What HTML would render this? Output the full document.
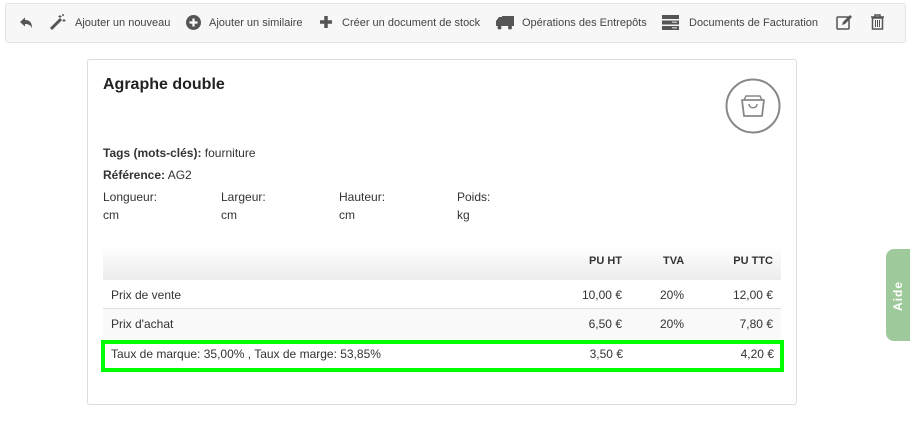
<!DOCTYPE html>
<html><head><meta charset="utf-8"><style>
*{box-sizing:border-box;margin:0;padding:0}
body{width:910px;height:427px;background:#fff;font-family:"Liberation Sans",Arial,sans-serif;color:#333;font-size:12px;position:relative;overflow:hidden}
.tb{position:absolute;left:5px;top:3px;width:901px;height:40px;background:#f7f7f7;border:1px solid #e3e3e3;border-radius:3px}
.tb span{position:absolute;top:13px;font-size:11px;color:#444;white-space:nowrap}
.tb svg{position:absolute}
.card{position:absolute;left:87px;top:59px;width:710px;height:346px;border:1px solid #ddd;border-radius:3px;background:#fff}
.abs{position:absolute;white-space:nowrap}
h1{position:absolute;left:15px;top:16px;font-size:16px;font-weight:bold;color:#222}
.lbl{font-size:12px;color:#333}
.thead{position:absolute;left:15px;top:186px;width:678px;height:34px;background:linear-gradient(#fff,#ececec)}
.row{position:absolute;left:15px;width:678px}
.r{position:absolute;text-align:right}
.aide{position:absolute;left:886px;top:249px;width:26px;height:92px;background:#9ec99a;border-radius:8px 0 0 8px}
.aide span{position:absolute;left:5px;top:62px;transform:rotate(-90deg);transform-origin:0 0;color:#fff;font-weight:bold;font-size:12px;letter-spacing:1px;width:40px}
</style></head><body>
<div class="tb">
<svg style="left:13px;top:12px" width="14" height="14" viewBox="0 0 14 14"><path d="M1 6 L6 1.5 V4 C11 4 13 7 13 12 C11 8.5 9 8 6 8 V10.5 Z" fill="#555"/></svg>
<svg style="left:43px;top:9px" width="18" height="18" viewBox="0 0 18 18"><path d="M2 16 L12 6" stroke="#555" stroke-width="3"/><path d="M11 2v3M9.5 3.5h3M15 6v3M13.5 7.5h3M14 1v2M13 2h2" stroke="#555" stroke-width="1"/></svg>
<span style="left:69px">Ajouter un nouveau</span>
<svg style="left:180px;top:11px" width="15" height="15" viewBox="0 0 15 15"><circle cx="7.5" cy="7.5" r="7.5" fill="#555"/><path d="M7.5 3.5v8M3.5 7.5h8" stroke="#fff" stroke-width="2.2"/></svg>
<span style="left:203px">Ajouter un similaire</span>
<svg style="left:313px;top:11px" width="14" height="14" viewBox="0 0 14 14"><path d="M7 1v12M1 7h12" stroke="#555" stroke-width="3.5"/></svg>
<span style="left:336px">Créer un document de stock</span>
<svg style="left:490px;top:11px" width="18" height="15" viewBox="0 0 18 15"><path d="M6 1h12v10H6zM0 6l3-4h3v9H0z" fill="#555"/><circle cx="3.5" cy="12.5" r="2" fill="#555"/><circle cx="14" cy="12.5" r="2" fill="#555"/></svg>
<span style="left:516px">Opérations des Entrepôts</span>
<svg style="left:656px;top:11px" width="17" height="15" viewBox="0 0 17 15"><rect y="0" width="17" height="4" fill="#555"/><rect y="5.5" width="17" height="4" fill="#555"/><rect y="11" width="17" height="4" fill="#555"/><rect x="10" y="6.5" width="5" height="1.5" fill="#bbb"/><rect x="10" y="12" width="5" height="1.5" fill="#bbb"/></svg>
<span style="left:683px">Documents de Facturation</span>
<svg style="left:830px;top:11px" width="16" height="15" viewBox="0 0 16 15"><rect x="1" y="2" width="12" height="12" fill="none" stroke="#555" stroke-width="1.5" rx="1"/><path d="M6 10l1-3 7-7 2 2-7 7z" fill="#555"/></svg>
<svg style="left:865px;top:10px" width="13" height="16" viewBox="0 0 13 16"><path d="M0 3h13M4 3V1h5v2" stroke="#555" stroke-width="1.5" fill="none"/><rect x="1.5" y="4" width="10" height="11" fill="none" stroke="#555" stroke-width="1.5"/><path d="M4.5 6v7M6.5 6v7M8.5 6v7" stroke="#555"/></svg>
</div>
<div class="card">
<h1>Agraphe double</h1>
<svg style="position:absolute;left:637px;top:18px" width="56" height="56" viewBox="0 0 56 56"><circle cx="28" cy="28" r="26.5" fill="none" stroke="#888" stroke-width="2"/><path d="M17 22h22l-2 16h-18z" fill="none" stroke="#888" stroke-width="1.8" stroke-linejoin="round"/><path d="M19 22l2-4h14l2 4" fill="none" stroke="#888" stroke-width="1.5"/><path d="M24 26c0 5 8 5 8 0" fill="none" stroke="#888" stroke-width="1.5"/></svg>
<div class="abs lbl" style="left:15px;top:86px"><b>Tags (mots-clés):</b> fourniture</div>
<div class="abs lbl" style="left:15px;top:108px"><b>Référence:</b> AG2</div>
<div class="abs lbl" style="left:15px;top:130px">Longueur:<br><span style="line-height:22px">cm</span></div>
<div class="abs lbl" style="left:133px;top:130px">Largeur:<br><span style="line-height:22px">cm</span></div>
<div class="abs lbl" style="left:251px;top:130px">Hauteur:<br><span style="line-height:22px">cm</span></div>
<div class="abs lbl" style="left:369px;top:130px">Poids:<br><span style="line-height:22px">kg</span></div>
<div class="thead">
<b class="r" style="right:159px;top:9px;font-size:11px">PU HT</b>
<b class="abs" style="left:560px;top:9px;font-size:11px">TVA</b>
<b class="r" style="right:8px;top:9px;font-size:11px">PU TTC</b>
</div>
<div class="row" style="top:220px;height:29px;border-bottom:1px solid #ddd">
<span class="abs" style="left:8px;top:8px">Prix de vente</span><span class="r" style="right:159px;top:8px">10,00 €</span><span class="abs" style="left:557px;top:8px">20%</span><span class="r" style="right:8px;top:8px">12,00 €</span>
</div>
<div class="row" style="top:249px;height:30px;background:#f9f9f9">
<span class="abs" style="left:8px;top:8px">Prix d'achat</span><span class="r" style="right:159px;top:8px">6,50 €</span><span class="abs" style="left:557px;top:8px">20%</span><span class="r" style="right:8px;top:8px">7,80 €</span>
</div>
<div class="row" style="left:13px;width:683px;top:280px;height:32px;border:4px solid #00ff00">
<span class="abs" style="left:6px;top:3px">Taux de marque: 35,00% , Taux de marge: 53,85%</span><span class="r" style="right:157px;top:3px">3,50 €</span><span class="r" style="right:6px;top:3px">4,20 €</span>
</div>
</div>
<div class="aide"><span>Aide</span></div>
</body></html>
